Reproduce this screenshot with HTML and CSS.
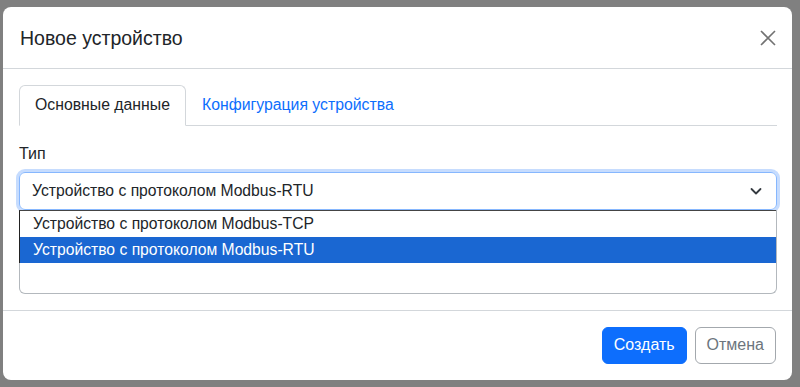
FILE: index.html
```html
<!DOCTYPE html>
<html lang="ru">
<head>
    <meta charset="UTF-8">
    <meta name="viewport" content="width=device-width, initial-scale=1.0">
    <title>Новое устройство</title>
    <link rel="stylesheet" href="styles.css">
</head>
<body>
    <div class="modal">
        <div class="modal-header">
            <h5 class="modal-title">Новое устройство</h5>
            <button class="btn-close" aria-label="Закрыть">
                <svg width="16" height="16" viewBox="0 0 16 16">
                    <path d="M1 1L15 15M15 1L1 15" stroke="#000" stroke-width="1.6" fill="none"/>
                </svg>
            </button>
        </div>

        <div class="modal-body">
            <ul class="nav-tabs">
                <li><a class="nav-link active" href="#">Основные данные</a></li>
                <li><a class="nav-link" href="#">Конфигурация устройства</a></li>
            </ul>

            <div class="tab-pane">
                <label class="form-label">Тип</label>
                <div class="form-select">
                    <span>Устройство с протоколом Modbus-RTU</span>
                    <svg width="16" height="16" viewBox="0 0 16 16">
                        <path d="M3.5 6l4.5 4.5L12.5 6" stroke="#343a40" stroke-width="1.8" fill="none" stroke-linecap="round" stroke-linejoin="round"/>
                    </svg>
                </div>
                <div class="field-below">
                    <ul class="options">
                        <li>Устройство с протоколом Modbus-TCP</li>
                        <li class="selected">Устройство с протоколом Modbus-RTU</li>
                    </ul>
                </div>
            </div>
        </div>

        <div class="modal-footer">
            <button class="btn btn-primary">Создать</button>
            <button class="btn btn-outline">Отмена</button>
        </div>
    </div>
</body>
</html>
```

FILE: styles.css
```css
/* Global */
body {
    margin: 0;
    font-family: 'Liberation Sans', Arial, sans-serif;
    font-size: 16px;
    line-height: 1.5;
    color: #212529;
    background: #808080;
    height: 387px;
    overflow: hidden;
}

/* Modal */
.modal {
    width: 789px;
    margin: 7px 8px 0 3px;
    background: #fff;
    border-radius: 8px;
}

.modal-header {
    display: flex;
    align-items: center;
    justify-content: space-between;
    padding: 16px 15px 15px 17px;
    border-bottom: 1px solid #d3d7db;
}

.modal-title {
    margin: 0;
    font-size: 19.5px;
    font-weight: normal;
    line-height: 30px;
}

.btn-close {
    display: flex;
    padding: 0;
    margin-right: 1px;
    border: none;
    background: none;
    opacity: 0.55;
    cursor: pointer;
}

.modal-body {
    padding: 16px 15px 16px 16px;
}

/* Tabs */
.nav-tabs {
    display: flex;
    margin: 0;
    padding: 0;
    list-style: none;
    border-bottom: 1px solid #d3d7db;
}

.nav-link {
    display: block;
    padding: 7px 15px 8px;
    margin-bottom: -1px;
    border: 1px solid transparent;
    border-radius: 6px 6px 0 0;
    color: #0d6efd;
    font-size: 15.8px;
    text-decoration: none;
}

.nav-link.active {
    color: #212529;
    background: #fff;
    border-color: #d3d7db #d3d7db #fff;
}

/* Form */
.tab-pane {
    margin-top: 16px;
}

.form-label {
    display: block;
    margin-bottom: 6px;
}

.form-select {
    display: flex;
    align-items: center;
    justify-content: space-between;
    height: 38px;
    box-sizing: border-box;
    padding: 0 12px;
    border: 1px solid #86b7fe;
    border-radius: 6px;
    box-shadow: 0 0 0 3px #c6dcfe;
    font-size: 15.7px;
}

.field-below {
    position: relative;
    z-index: 1;
    height: 84px;
    box-sizing: border-box;
    background: #fff;
    border: 1px solid #b3b8bd;
    border-top: none;
    border-radius: 0 0 6px 6px;
}

.options {
    margin: 0 0 0 -1px;
    padding: 0;
    list-style: none;
    border-top: 1px solid #444;
    border-left: 1px solid #222;
    font-size: 15.7px;
}

.options li {
    height: 26px;
    line-height: 26px;
    padding: 0 13px;
}

.options li.selected {
    background: #1a67d2;
    color: #fff;
}

/* Footer */
.modal-footer {
    display: flex;
    justify-content: flex-end;
    gap: 8px;
    padding: 16px 16px 16px;
    border-top: 1px solid #d3d7db;
}

.btn {
    height: 37px;
    padding: 0 11px;
    border-radius: 6px;
    font-family: inherit;
    font-size: 16px;
    cursor: pointer;
}

.btn-primary {
    background: #0d6efd;
    border: 1px solid #0d6efd;
    color: #fff;
}

.btn-outline {
    background: #fff;
    border: 1px solid #a3a8ad;
    color: #6c757d;
}
```
